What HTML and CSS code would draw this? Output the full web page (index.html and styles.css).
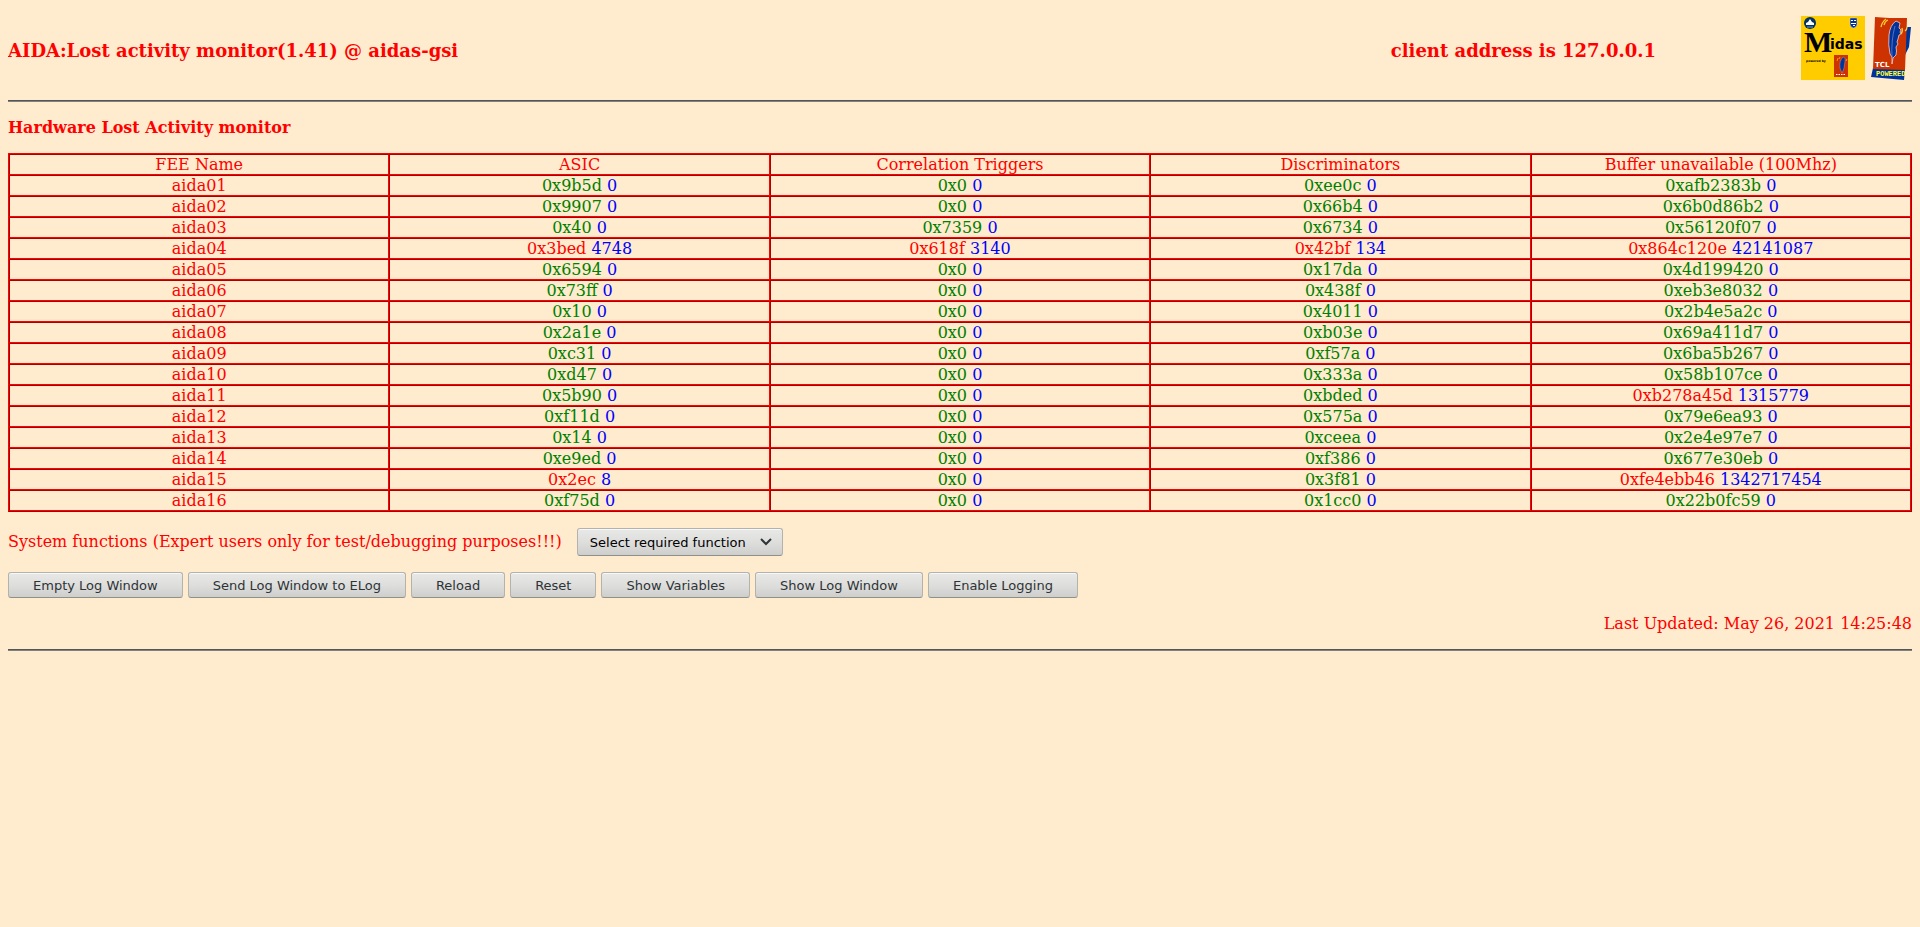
FILE: index.html
```html
<!DOCTYPE html>
<html lang="en">
<head>
    <meta charset="UTF-8">
    <meta name="viewport" content="width=device-width, initial-scale=1.0">
    <title>AIDA Lost activity monitor</title>
    <link rel="stylesheet" href="styles.css">
</head>
<body>
    <header class="page-header">
        <h1>AIDA:Lost activity monitor(1.41) @ aidas-gsi</h1>
        <div class="client">client address is 127.0.0.1</div>
        <div class="logos">
            <svg class="midas-logo" viewBox="0 0 64 64" role="img" aria-label="Midas">
                <rect width="64" height="64" fill="#fc0"/>
                <circle cx="9" cy="7" r="6" fill="#036"/>
                <path d="M5 9v-2l2-1 2-3 2 3 2 1v2z" fill="#fff"/>
                <path d="M6 11h6" stroke="#69c"/>
                <path d="M49 2h7v6q0 3-3.500 4q-3.500-1-3.500-4z" fill="#039" stroke="#ccd" stroke-width=".5"/>
                <path d="M50 4h2v1h-2zM53 4h2v1h-2zM50 7h5v1h-5zM52 9h2v1h-2z" fill="#fff"/>
                <text x="3" y="36" class="logo-m">M</text>
                <text x="29" y="33" class="logo-idas">idas</text>
                <text x="5" y="46" class="logo-by">powered by</text>
                <rect x="33" y="39" width="14" height="22" fill="#c30"/>
                <path d="M42 41q3 0 2 4l-1 7-2 5-2-5q-1-7 3-11z" fill="#039" stroke="#fcc" stroke-width=".3"/>
                <path d="M36 45l1-3M38 43l1-2M45 45l1-2" stroke="#fc0" stroke-width=".7"/>
                <path d="M35 58.500h10" stroke="#fff" stroke-dasharray="1.500 1"/>
            </svg>
            <svg class="tcl-logo" viewBox="0 0 42 64" role="img" aria-label="Tcl powered">
                <path d="M36 11l5 0-2 20-4 8zM3 52l32 1-1 11-33-3z" fill="#039"/>
                <path d="M5 1l14 1 18 0-1 26-1 26-32-1 1-26z" fill="#c30"/>
                <path d="M26 5q-6 4-7 14-1 10 1 19l2 3 0 7 1-6 3-3q1-4 0-8l2-3-1-2 1-3 1-4 2-1-1-2 1-2-2-2 1-5z" fill="#039" stroke="#fcc" stroke-width=".8"/>
                <path d="M25 10q-4 14-3 32" fill="none" stroke="#99c" stroke-width=".6"/>
                <path d="M11 11q1-5 5-8M14 9q1-4 4-5M31 18q2-2 1-6M35 15q2-1 2-4" fill="none" stroke="#fc3" stroke-width="1.300"/>
                <text x="5" y="51" class="logo-tcl">TCL</text>
                <text x="6" y="60" class="logo-powered">POWERED</text>
            </svg>
        </div>
    </header>
    <hr>
    <h2>Hardware Lost Activity monitor</h2>

    <table class="monitor">
        <thead>
            <tr>
                <th>FEE Name</th>
                <th>ASIC</th>
                <th>Correlation Triggers</th>
                <th>Discriminators</th>
                <th>Buffer unavailable (100Mhz)</th>
            </tr>
        </thead>
        <tbody id="monitor-rows"></tbody>
    </table>

    <form class="functions">
        <label for="system-function">System functions (Expert users only for test/debugging purposes!!!)</label>
        <span class="select-wrap">
            <select id="system-function">
                <option>Select required function</option>
            </select>
            <svg class="chevron" viewBox="0 0 12 8"><path d="M1 1l5 5 5-5" fill="none" stroke="#2e3436" stroke-width="2"/></svg>
        </span>
    </form>

    <div class="buttons">
        <button type="button">Empty Log Window</button>
        <button type="button">Send Log Window to ELog</button>
        <button type="button">Reload</button>
        <button type="button">Reset</button>
        <button type="button">Show Variables</button>
        <button type="button">Show Log Window</button>
        <button type="button">Enable Logging</button>
    </div>

    <p class="updated">Last Updated: May 26, 2021 14:25:48</p>
    <hr>

    <script>
        // value and change since last reading, for each counter
        const rows = [
            ["aida01", "0x9b5d", 0, "0x0", 0, "0xee0c", 0, "0xafb2383b", 0],
            ["aida02", "0x9907", 0, "0x0", 0, "0x66b4", 0, "0x6b0d86b2", 0],
            ["aida03", "0x40", 0, "0x7359", 0, "0x6734", 0, "0x56120f07", 0],
            ["aida04", "0x3bed", 4748, "0x618f", 3140, "0x42bf", 134, "0x864c120e", 42141087],
            ["aida05", "0x6594", 0, "0x0", 0, "0x17da", 0, "0x4d199420", 0],
            ["aida06", "0x73ff", 0, "0x0", 0, "0x438f", 0, "0xeb3e8032", 0],
            ["aida07", "0x10", 0, "0x0", 0, "0x4011", 0, "0x2b4e5a2c", 0],
            ["aida08", "0x2a1e", 0, "0x0", 0, "0xb03e", 0, "0x69a411d7", 0],
            ["aida09", "0xc31", 0, "0x0", 0, "0xf57a", 0, "0x6ba5b267", 0],
            ["aida10", "0xd47", 0, "0x0", 0, "0x333a", 0, "0x58b107ce", 0],
            ["aida11", "0x5b90", 0, "0x0", 0, "0xbded", 0, "0xb278a45d", 1315779],
            ["aida12", "0xf11d", 0, "0x0", 0, "0x575a", 0, "0x79e6ea93", 0],
            ["aida13", "0x14", 0, "0x0", 0, "0xceea", 0, "0x2e4e97e7", 0],
            ["aida14", "0xe9ed", 0, "0x0", 0, "0xf386", 0, "0x677e30eb", 0],
            ["aida15", "0x2ec", 8, "0x0", 0, "0x3f81", 0, "0xfe4ebb46", 1342717454],
            ["aida16", "0xf75d", 0, "0x0", 0, "0x1cc0", 0, "0x22b0fc59", 0]
        ];

        rows.forEach(row => {
            const tr = document.createElement('tr');
            let html = `<td>${row[0]}</td>`;
            for (let i = 1; i < row.length; i += 2) {
                const state = row[i + 1] > 0 ? 'changed' : 'steady';
                html += `<td><span class="${state}">${row[i]}</span> <span class="delta">${row[i + 1]}</span></td>`;
            }
            tr.innerHTML = html;
            document.getElementById('monitor-rows').appendChild(tr);
        });
    </script>
</body>
</html>
```

FILE: styles.css
```css
* {
    box-sizing: border-box;
}

body {
    margin: 8px;
    background: #ffebcd;
    color: #f00;
    font-family: "DejaVu Serif", serif;
    font-size: 16px;
    line-height: 19px;
}

.page-header {
    display: flex;
    align-items: center;
    padding-bottom: 6px;
}

h1, .client {
    margin: 0;
    font-size: 18px;
    font-weight: bold;
    line-height: 22px;
}

h1 {
    flex: 1;
}

.client {
    margin-right: 145px;
}

.logos {
    display: flex;
    gap: 5px;
    padding: 8px 0 14px;
}

.logos svg {
    display: block;
    height: 64px;
}

.midas-logo {
    width: 64px;
}

.tcl-logo {
    width: 42px;
}

.logo-m {
    font: bold 30px "Liberation Serif", serif;
}

.logo-idas {
    font: bold 14px "DejaVu Sans", sans-serif;
}

.logo-by {
    font: bold 3px "DejaVu Sans", sans-serif;
}

.logo-tcl {
    font: bold 7px "DejaVu Sans", sans-serif;
    fill: #fff;
}

.logo-powered {
    font: bold 7px "Liberation Mono", monospace;
    fill: #ff3;
}

hr {
    height: 2px;
    margin: 0;
    border: 0;
    border-top: 1px solid #555;
    border-bottom: 1px solid #808080;
}

h2 {
    margin: 16px 0;
    font-size: 16px;
}

.monitor {
    width: 100%;
    table-layout: fixed;
    border-collapse: separate;
    border-spacing: 0;
    border: 1px solid;
    border-color: #f00 #a00 #a00 #f00;
}

.monitor th, .monitor td {
    padding: 0;
    border: 1px solid;
    border-color: #a00 #f00 #f00 #a00;
    font-weight: normal;
    text-align: center;
}

.steady {
    color: #008000;
}

.changed {
    color: #f00;
}

.delta {
    color: #00f;
}

.functions {
    display: flex;
    align-items: center;
    gap: 15px;
    margin: 16px 0;
}

.functions label {
    padding-bottom: 2px;
}

.select-wrap {
    position: relative;
}

select, button {
    border: 1px solid #b2b2ae;
    border-bottom-color: #8f8f8c;
    border-radius: 3px;
    background: linear-gradient(#e8e8e7, #dededd 50%, #cececd);
    box-shadow: inset 0 1px #f8f8f8;
    font-family: "DejaVu Sans", sans-serif;
    font-size: 13px;
}

select {
    display: block;
    height: 28px;
    padding: 0 36px 0 12px;
    color: #000;
    appearance: none;
}

.chevron {
    position: absolute;
    top: 10px;
    right: 11px;
    width: 12px;
    height: 8px;
    pointer-events: none;
}

.buttons {
    display: flex;
    flex-wrap: wrap;
    gap: 5px;
}

button {
    height: 26px;
    padding: 0 24px;
    color: #2e3436;
}

.updated {
    margin: 16px 0;
    text-align: right;
}
```
